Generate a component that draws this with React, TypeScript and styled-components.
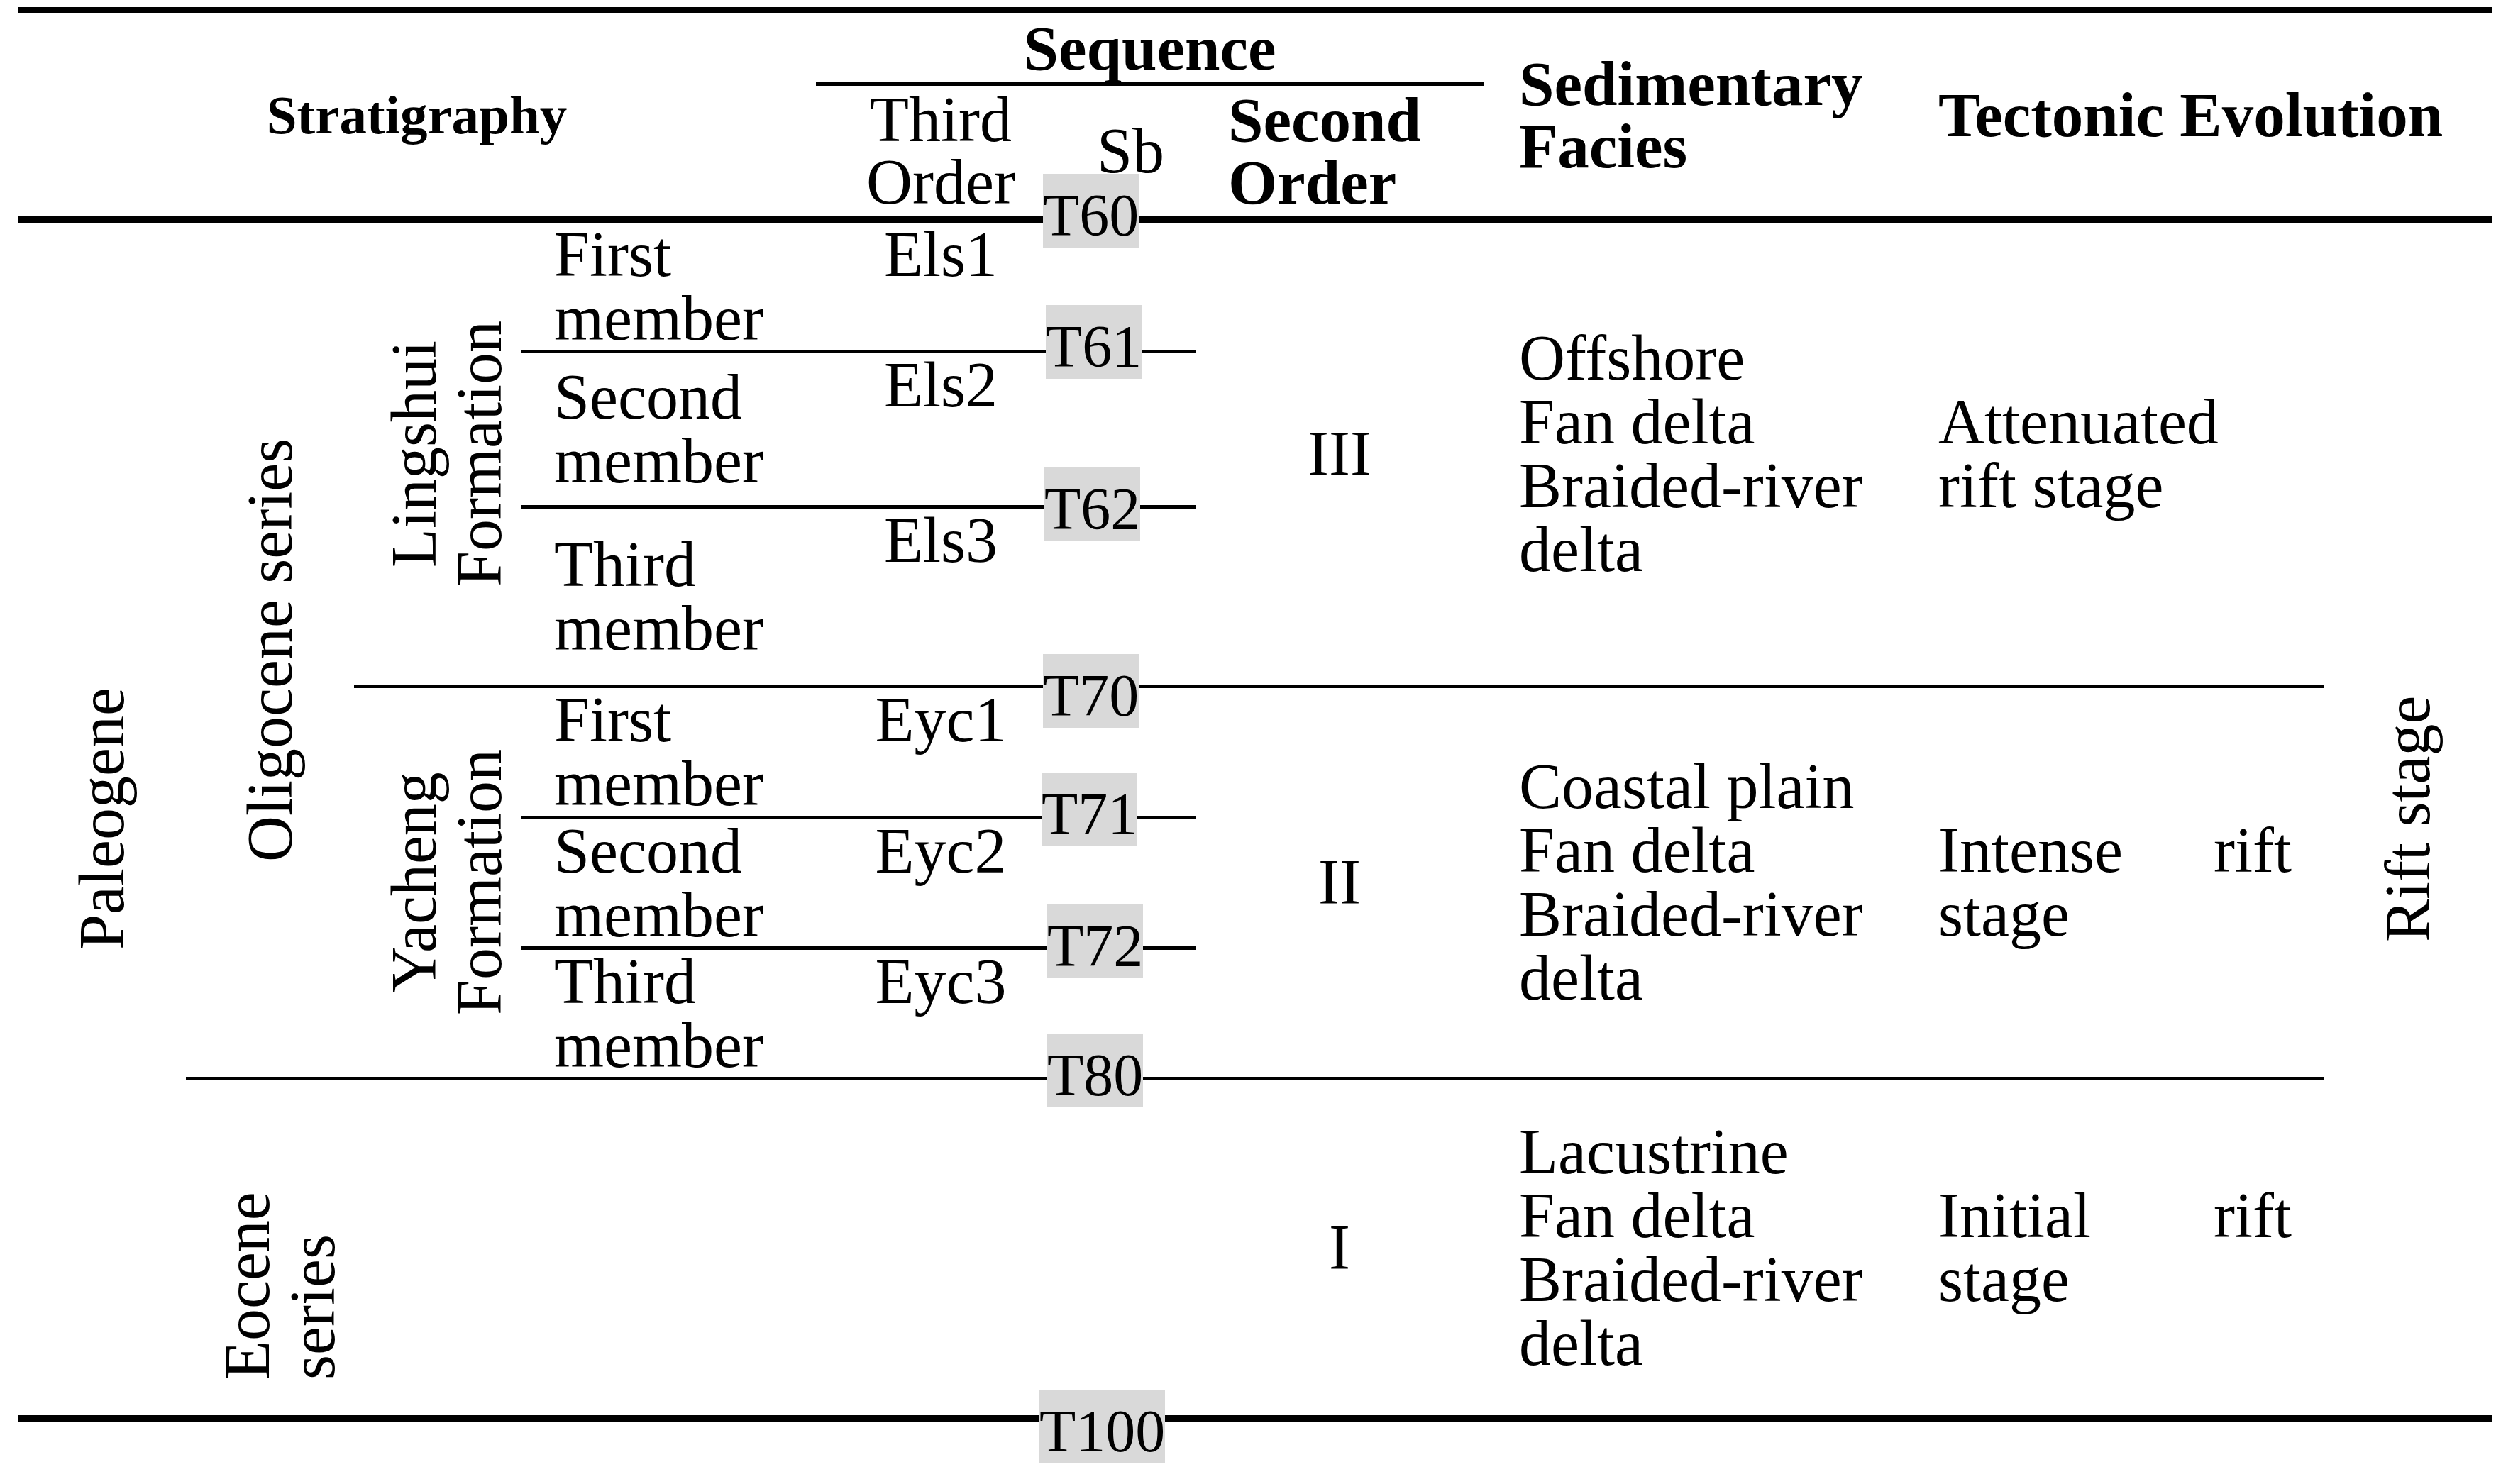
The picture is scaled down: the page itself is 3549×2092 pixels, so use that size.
import React from "react";
import styled, { createGlobalStyle } from "styled-components";

const GlobalStyle = createGlobalStyle`
  html, body {
    margin: 0;
    padding: 0;
    background: #ffffff;
  }
  body {
    font-family: "Liberation Serif", "Times New Roman", serif;
    color: #000000;
  }
`;

type RuleType = "none" | "thin" | "mid" | "thick";

const ruleWidth = (rule?: RuleType) =>
  rule === "thick" ? "9px" : rule === "mid" ? "5px" : rule === "thin" ? "5px" : "0";

const Table = styled.div`
  display: grid;
  grid-template-columns: 237px 237px 236px 415px 352px 183px 406px 609px 575px 237px;
  grid-template-rows: 102px 193px 184px 219px 253px 185px 184px 184px 472px;
  width: 3487px;
  margin: 10px 0 88px 25px;
  border-top: 9px solid #000;
  border-bottom: 9px solid #000;
  font-size: 90px;
  line-height: 90px;
`;

type AreaProps = {
  $col: string;
  $row: string;
  $rule?: RuleType;
};

const Area = styled.div<AreaProps>`
  grid-column: ${({ $col }) => $col};
  grid-row: ${({ $row }) => $row};
  box-sizing: border-box;
  position: relative;
  border-bottom: ${({ $rule }) => ruleWidth($rule)} solid #000;
`;

const HeadCell = styled(Area)<{ $size?: number; $bold?: boolean; $pad?: number; $center?: boolean }>`
  display: flex;
  flex-direction: column;
  justify-content: center;
  align-items: ${({ $center }) => ($center ? "center" : "flex-start")};
  text-align: ${({ $center }) => ($center ? "center" : "left")};
  padding-left: ${({ $pad }) => $pad ?? 0}px;
  font-size: ${({ $size }) => $size ?? 90}px;
  font-weight: ${({ $bold }) => ($bold ? 700 : 400)};
  line-height: 88px;
`;

const SideCell = styled(Area)<{ $shift?: number }>`
  display: flex;
  justify-content: center;
  align-items: stretch;
  padding-left: ${({ $shift }) => $shift ?? 0}px;
`;

const Rotated = styled.div<{ $start?: boolean; $gap?: number }>`
  box-sizing: border-box;
  height: 100%;
  writing-mode: vertical-rl;
  transform: rotate(180deg);
  text-align: ${({ $start }) => ($start ? "start" : "center")};
  padding-top: ${({ $gap }) => $gap ?? 0}px;
  line-height: 92px;
`;

const MemberCell = styled(Area)`
  display: flex;
  align-items: center;
  padding-left: 46px;
`;

const UnitCell = styled(Area)`
  text-align: center;
`;

const SbCell = styled(Area)`
  display: flex;
  align-items: center;
  justify-content: center;
`;

const Marker = styled.span<{ $bottom: number; $left: number }>`
  position: absolute;
  left: ${({ $left }) => $left}px;
  bottom: ${({ $bottom }) => $bottom}px;
  height: 104px;
  box-sizing: border-box;
  padding-top: 14px;
  background: #d9d9d9;
  font-size: 84px;
  line-height: 90px;
  white-space: nowrap;
  z-index: 1;
`;

const OrderCell = styled(Area)`
  display: flex;
  align-items: center;
  justify-content: center;
`;

const FaciesCell = styled(Area)`
  display: flex;
  flex-direction: column;
  justify-content: center;
  padding-left: 50px;
`;

const StageCell = styled(Area)`
  display: flex;
  align-items: center;
  padding: 0 45px 0 32px;
  text-align: justify;
`;

type MemberRow = {
  row: string;
  name: string;
  unit: string;
  mark: string;
  bottom: number;
  left: number;
};

const memberRows: MemberRow[] = [
  { row: "3 / 4", name: "First member", unit: "Els1", mark: "T61", bottom: -41, left: -28 },
  { row: "4 / 5", name: "Second member", unit: "Els2", mark: "T62", bottom: -51, left: -30 },
  { row: "5 / 6", name: "Third member", unit: "Els3", mark: "T70", bottom: -61, left: -32 },
  { row: "6 / 7", name: "First member", unit: "Eyc1", mark: "T71", bottom: -43, left: -34 },
  { row: "7 / 8", name: "Second member", unit: "Eyc2", mark: "T72", bottom: -45, left: -26 },
  { row: "8 / 9", name: "Third member", unit: "Eyc3", mark: "T80", bottom: -43, left: -26 },
];

type StageRow = {
  row: string;
  rule: RuleType;
  order: string;
  facies: string[];
  tectonic: string;
};

const stageRows: StageRow[] = [
  {
    row: "3 / 6",
    rule: "thin",
    order: "III",
    facies: ["Offshore", "Fan delta", "Braided-river delta"],
    tectonic: "Attenuated rift stage",
  },
  {
    row: "6 / 9",
    rule: "thin",
    order: "II",
    facies: ["Coastal plain", "Fan delta", "Braided-river delta"],
    tectonic: "Intense rift stage",
  },
  {
    row: "9 / 10",
    rule: "none",
    order: "I",
    facies: ["Lacustrine", "Fan delta", "Braided-river delta"],
    tectonic: "Initial rift stage",
  },
];

const App = () => {
  return (
    <>
      <GlobalStyle />
      <Table>
        <HeadCell $col="1 / 5" $row="1 / 3" $rule="thick" $size={77} $bold $center>
          Stratigraphy
        </HeadCell>
        <HeadCell $col="5 / 8" $row="1 / 2" $rule="mid" $size={89} $bold $center>
          Sequence
        </HeadCell>
        <HeadCell $col="5 / 6" $row="2 / 3" $rule="thick" $center>
          Third Order
        </HeadCell>
        <HeadCell $col="6 / 7" $row="2 / 3" $rule="thick" $center>
          Sb
          <Marker $bottom={-44} $left={-32}>T60</Marker>
        </HeadCell>
        <HeadCell $col="7 / 8" $row="2 / 3" $rule="thick" $size={89} $bold $pad={46}>
          Second Order
        </HeadCell>
        <HeadCell $col="8 / 9" $row="1 / 3" $rule="thick" $size={89} $bold $pad={50}>
          Sedimentary Facies
        </HeadCell>
        <HeadCell $col="9 / 11" $row="1 / 3" $rule="thick" $size={89} $bold $pad={32}>
          Tectonic Evolution
        </HeadCell>

        <SideCell $col="1 / 2" $row="3 / 10">
          <Rotated>Paleogene</Rotated>
        </SideCell>
        <SideCell $col="2 / 3" $row="3 / 9" $rule="thin">
          <Rotated>Oligocene series</Rotated>
        </SideCell>
        <SideCell $col="2 / 3" $row="9 / 10" $shift={28}>
          <Rotated $start $gap={50}>
            Eocene series
          </Rotated>
        </SideCell>
        <SideCell $col="3 / 4" $row="3 / 6" $rule="thin" $shift={26}>
          <Rotated>Lingshui Formation</Rotated>
        </SideCell>
        <SideCell $col="3 / 4" $row="6 / 9" $rule="thin" $shift={26}>
          <Rotated>Yacheng Formation</Rotated>
        </SideCell>

        {memberRows.map((m) => (
          <React.Fragment key={m.mark}>
            <MemberCell $col="4 / 5" $row={m.row} $rule="thin">
              {m.name}
            </MemberCell>
            <UnitCell $col="5 / 6" $row={m.row} $rule="thin">
              {m.unit}
            </UnitCell>
            <SbCell $col="6 / 7" $row={m.row} $rule="thin">
              <Marker $bottom={m.bottom} $left={m.left}>
                {m.mark}
              </Marker>
            </SbCell>
          </React.Fragment>
        ))}
        <SbCell $col="6 / 7" $row="9 / 10">
          <Marker $bottom={-68} $left={-37}>T100</Marker>
        </SbCell>

        {stageRows.map((s) => (
          <React.Fragment key={s.order}>
            <OrderCell $col="7 / 8" $row={s.row} $rule={s.rule}>
              {s.order}
            </OrderCell>
            <FaciesCell $col="8 / 9" $row={s.row} $rule={s.rule}>
              {s.facies.map((f) => (
                <div key={f}>{f}</div>
              ))}
            </FaciesCell>
            <StageCell $col="9 / 10" $row={s.row} $rule={s.rule}>
              <div>{s.tectonic}</div>
            </StageCell>
          </React.Fragment>
        ))}

        <SideCell $col="10 / 11" $row="3 / 10">
          <Rotated>Rift stage</Rotated>
        </SideCell>
      </Table>
    </>
  );
};

export default App;
